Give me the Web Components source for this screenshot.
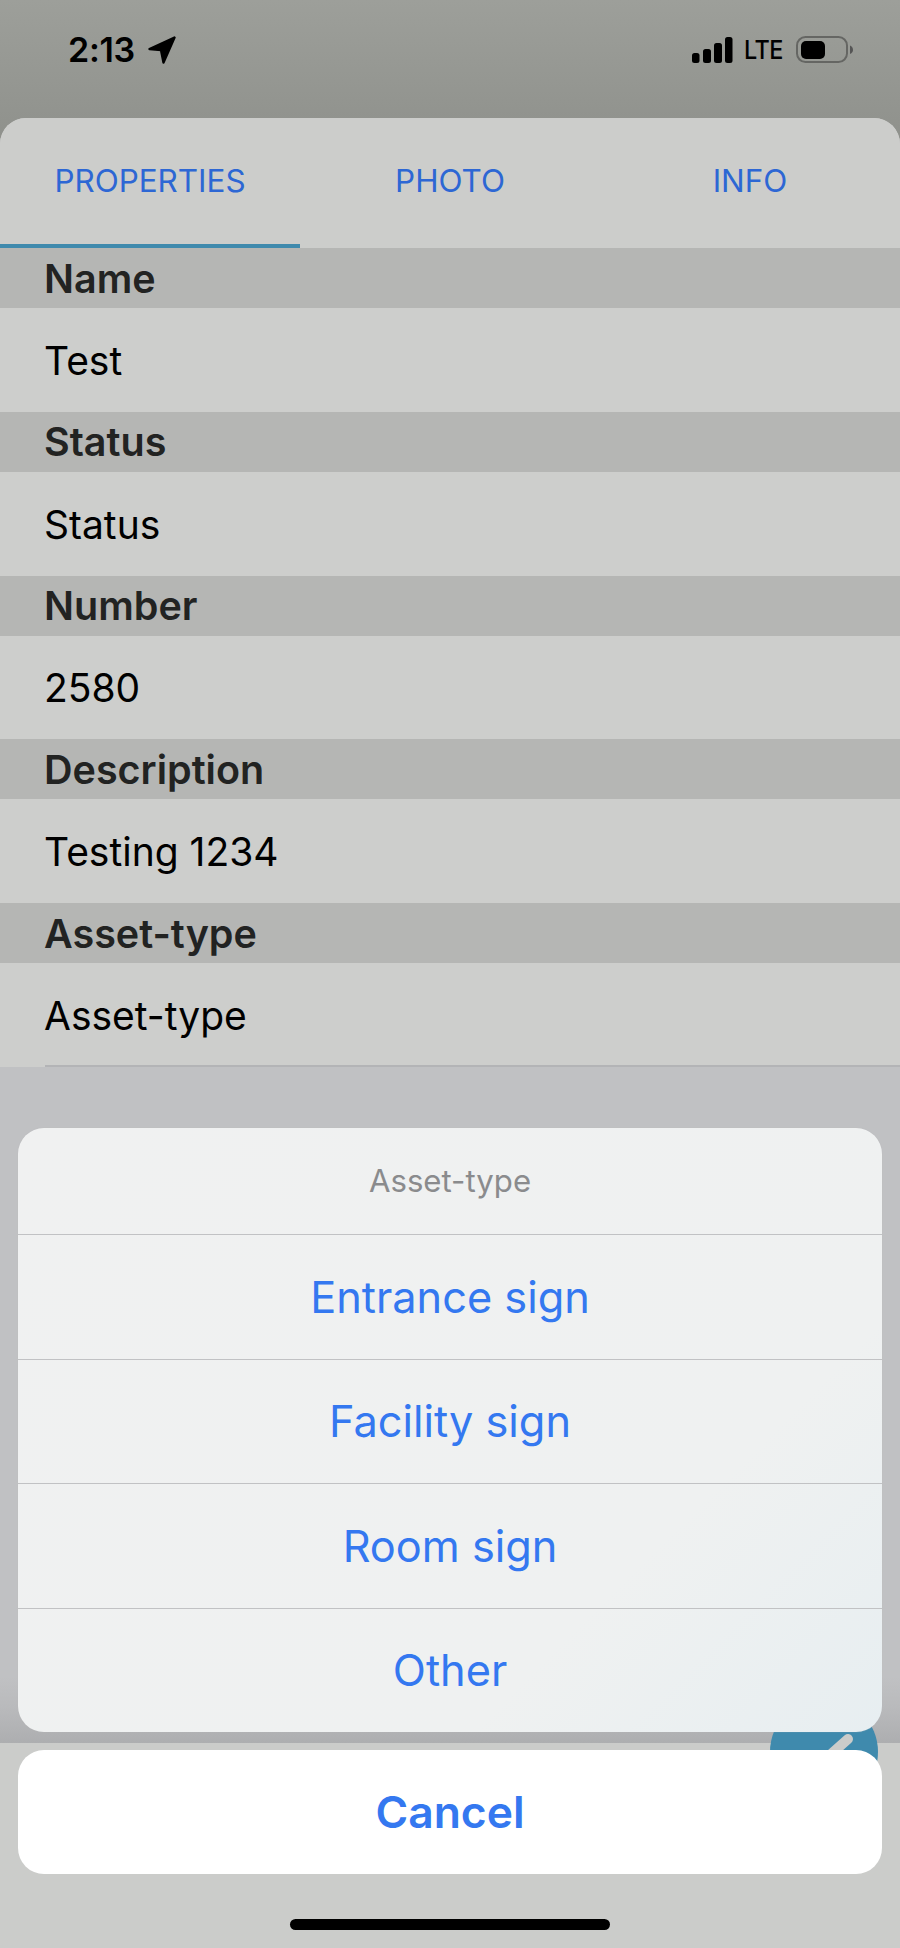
<!DOCTYPE html>
<html lang="en"><head><meta charset="utf-8"><title>Asset-type</title>
<style>
html,body{margin:0;padding:0;background:#cbccca}
body{font-family:Inter,"Noto Sans","Liberation Sans",sans-serif}
</style></head><body>
<app-screen>
  <status-bar slot="status" time="2:13"></status-bar>
  <prop-tabs slot="tabs">
    <tab-item active>PROPERTIES</tab-item><tab-item>PHOTO</tab-item><tab-item>INFO</tab-item>
  </prop-tabs>
  <prop-field slot="fields" label="Name">Test</prop-field>
  <prop-field slot="fields" label="Status">Status</prop-field>
  <prop-field slot="fields" label="Number">2580</prop-field>
  <prop-field slot="fields" label="Description">Testing 1234</prop-field>
  <prop-field slot="fields" label="Asset-type" ruled>Asset-type</prop-field>
  <edit-fab slot="overlay"></edit-fab>
  <action-sheet slot="overlay" heading="Asset-type">
    <sheet-option>Entrance sign</sheet-option>
    <sheet-option>Facility sign</sheet-option>
    <sheet-option>Room sign</sheet-option>
    <sheet-option>Other</sheet-option>
  </action-sheet>
  <cancel-button slot="overlay">Cancel</cancel-button>
  <home-bar slot="overlay"></home-bar>
</app-screen>
<script>
function def(name, css, html){
  customElements.define(name, class extends HTMLElement{
    constructor(){super();const r=this.attachShadow({mode:'open'});
      r.innerHTML='<style>'+css+'</style>'+(typeof html==='function'?html(this):html);}
  });
}
def('app-screen',`
:host{display:flex;flex-direction:column;position:relative;width:900px;height:1948px;overflow:hidden;background:#cbccca}
.top{background:linear-gradient(#9d9f9a,#8e908b);height:150px;margin-bottom:-32px;flex:none}
.sheet{position:relative;border-radius:26px 26px 0 0;overflow:hidden;background:#cccdcb;flex:none}
.dim{height:676.25px;flex:none;background:linear-gradient(#c0c1c3 0,#c0c1c3 610px,#b9babc 640px,#adaeb0 676px)}
`,`<div class="top"><slot name="status"></slot></div>
<div class="sheet"><slot name="tabs"></slot><slot name="fields"></slot></div>
<div class="dim"></div>
<slot name="overlay"></slot>`);

def('status-bar',`
:host{display:flex;justify-content:space-between;align-items:flex-start;height:118px;box-sizing:border-box;padding:36px 46px 0 68px;color:#000}
.l{display:flex;align-items:center;gap:13px;height:28px}
.t{font:600 34px/28px Inter,sans-serif;letter-spacing:-.3px}
.r{display:flex;align-items:center;height:28px}
.lte{font:500 26px/28px Inter,sans-serif;letter-spacing:-.6px;margin:0 12px 0 11px;transform:scaleX(.9);transform-origin:left center;width:40px}
svg{display:block}
`,h=>`<div class="l"><span class="t">${h.getAttribute('time')}</span>
<svg width="28" height="28" viewBox="0 0 28 28"><path d="M26.5 1.5 1.5 13 13 14 15.5 26.5Z" fill="#000" stroke="#000" stroke-width="2.4" stroke-linejoin="round"/></svg></div>
<div class="r">
<svg width="41" height="26" viewBox="0 0 41 26"><rect x="0" y="16" width="7.5" height="10" rx="2.5"/><rect x="11" y="12" width="8" height="14" rx="2.5"/><rect x="22" y="6" width="8" height="20" rx="2.5"/><rect x="33" y="0" width="7.5" height="26" rx="2.5"/></svg>
<span class="lte">LTE</span>
<svg width="58" height="28" viewBox="0 0 58 28"><rect x="1" y="1" width="50" height="25" rx="8.5" fill="none" stroke="#656663" stroke-width="2"/><rect x="5" y="5" width="24" height="18" rx="5"/><path d="M54 9.5c2 .8 3 2.3 3 4.3s-1 3.5-3 4.2Z" fill="#555"/></svg>
</div>`);

def('prop-tabs',`
:host{display:flex;height:130px;background:#cccdcb}
`,`<slot></slot>`);
def('tab-item',`
:host{flex:1 1 0;display:flex;align-items:center;justify-content:center;box-sizing:border-box;height:130px;font:400 31.4px Inter,sans-serif;color:#2d67d4;border-bottom:4px solid transparent}
:host([active]){border-bottom-color:#3f8aad}
`,`<slot></slot>`);

def('prop-field',`
:host{display:block;position:relative}
.h{height:60px;background:#b5b6b4;display:flex;align-items:center;padding-left:44px;padding-top:1px;font:600 39.5px Inter,sans-serif;color:#222322;box-sizing:border-box}
.v{height:103.75px;background:#cdcecc;display:flex;align-items:center;padding-left:44px;padding-top:1px;box-sizing:border-box;font:400 39px Inter,sans-serif;color:#000}
:host([ruled]) .v{position:relative}
:host([ruled]) .v::after{content:"";position:absolute;left:45px;right:0;bottom:0;height:2px;background:#b3b4b6}
`,h=>`<div class="h">${h.getAttribute('label')}</div><div class="v"><slot></slot></div>`);

def('edit-fab',`
:host{display:block;position:absolute;left:770px;top:1698px;width:108px;height:108px;border-radius:50%;background:#3f8aad}
svg{display:block}
`,`<svg width="108" height="108" viewBox="0 0 108 108"><path d="M78 41 60 57" stroke="#cbccca" stroke-width="10" stroke-linecap="round" fill="none"/></svg>`);

def('action-sheet',`
:host{display:block;position:absolute;left:18px;top:1128px;width:864px;height:604px;border-radius:26px;overflow:hidden;background:linear-gradient(135deg,#f0f1f1 0,#eff1f1 72%,#e7eef1 100%);box-shadow:0 0 1px #b5b6b8}
.title{height:106px;display:flex;align-items:center;justify-content:center;font:400 31.2px Inter,sans-serif;color:#8a8b8d;padding-bottom:1px;box-sizing:border-box}
`,h=>`<div class="title">${h.getAttribute('heading')}</div><slot></slot>`);
def('sheet-option',`
:host{display:flex;align-items:center;justify-content:center;height:124.5px;box-sizing:border-box;border-top:1.5px solid #c1c2c4;font:400 43.3px Inter,sans-serif;color:#3478f0}
`,`<slot></slot>`);
def('cancel-button',`
:host{display:flex;align-items:center;justify-content:center;position:absolute;left:18px;top:1750px;width:864px;height:124px;border-radius:26px;background:#fff;font:600 44.4px Inter,sans-serif;color:#3478f0}
`,`<slot></slot>`);
def('home-bar',`
:host{display:block;position:absolute;left:290px;top:1919px;width:320px;height:11px;border-radius:6px;background:#000}
`,``);
</script>
</body></html>
